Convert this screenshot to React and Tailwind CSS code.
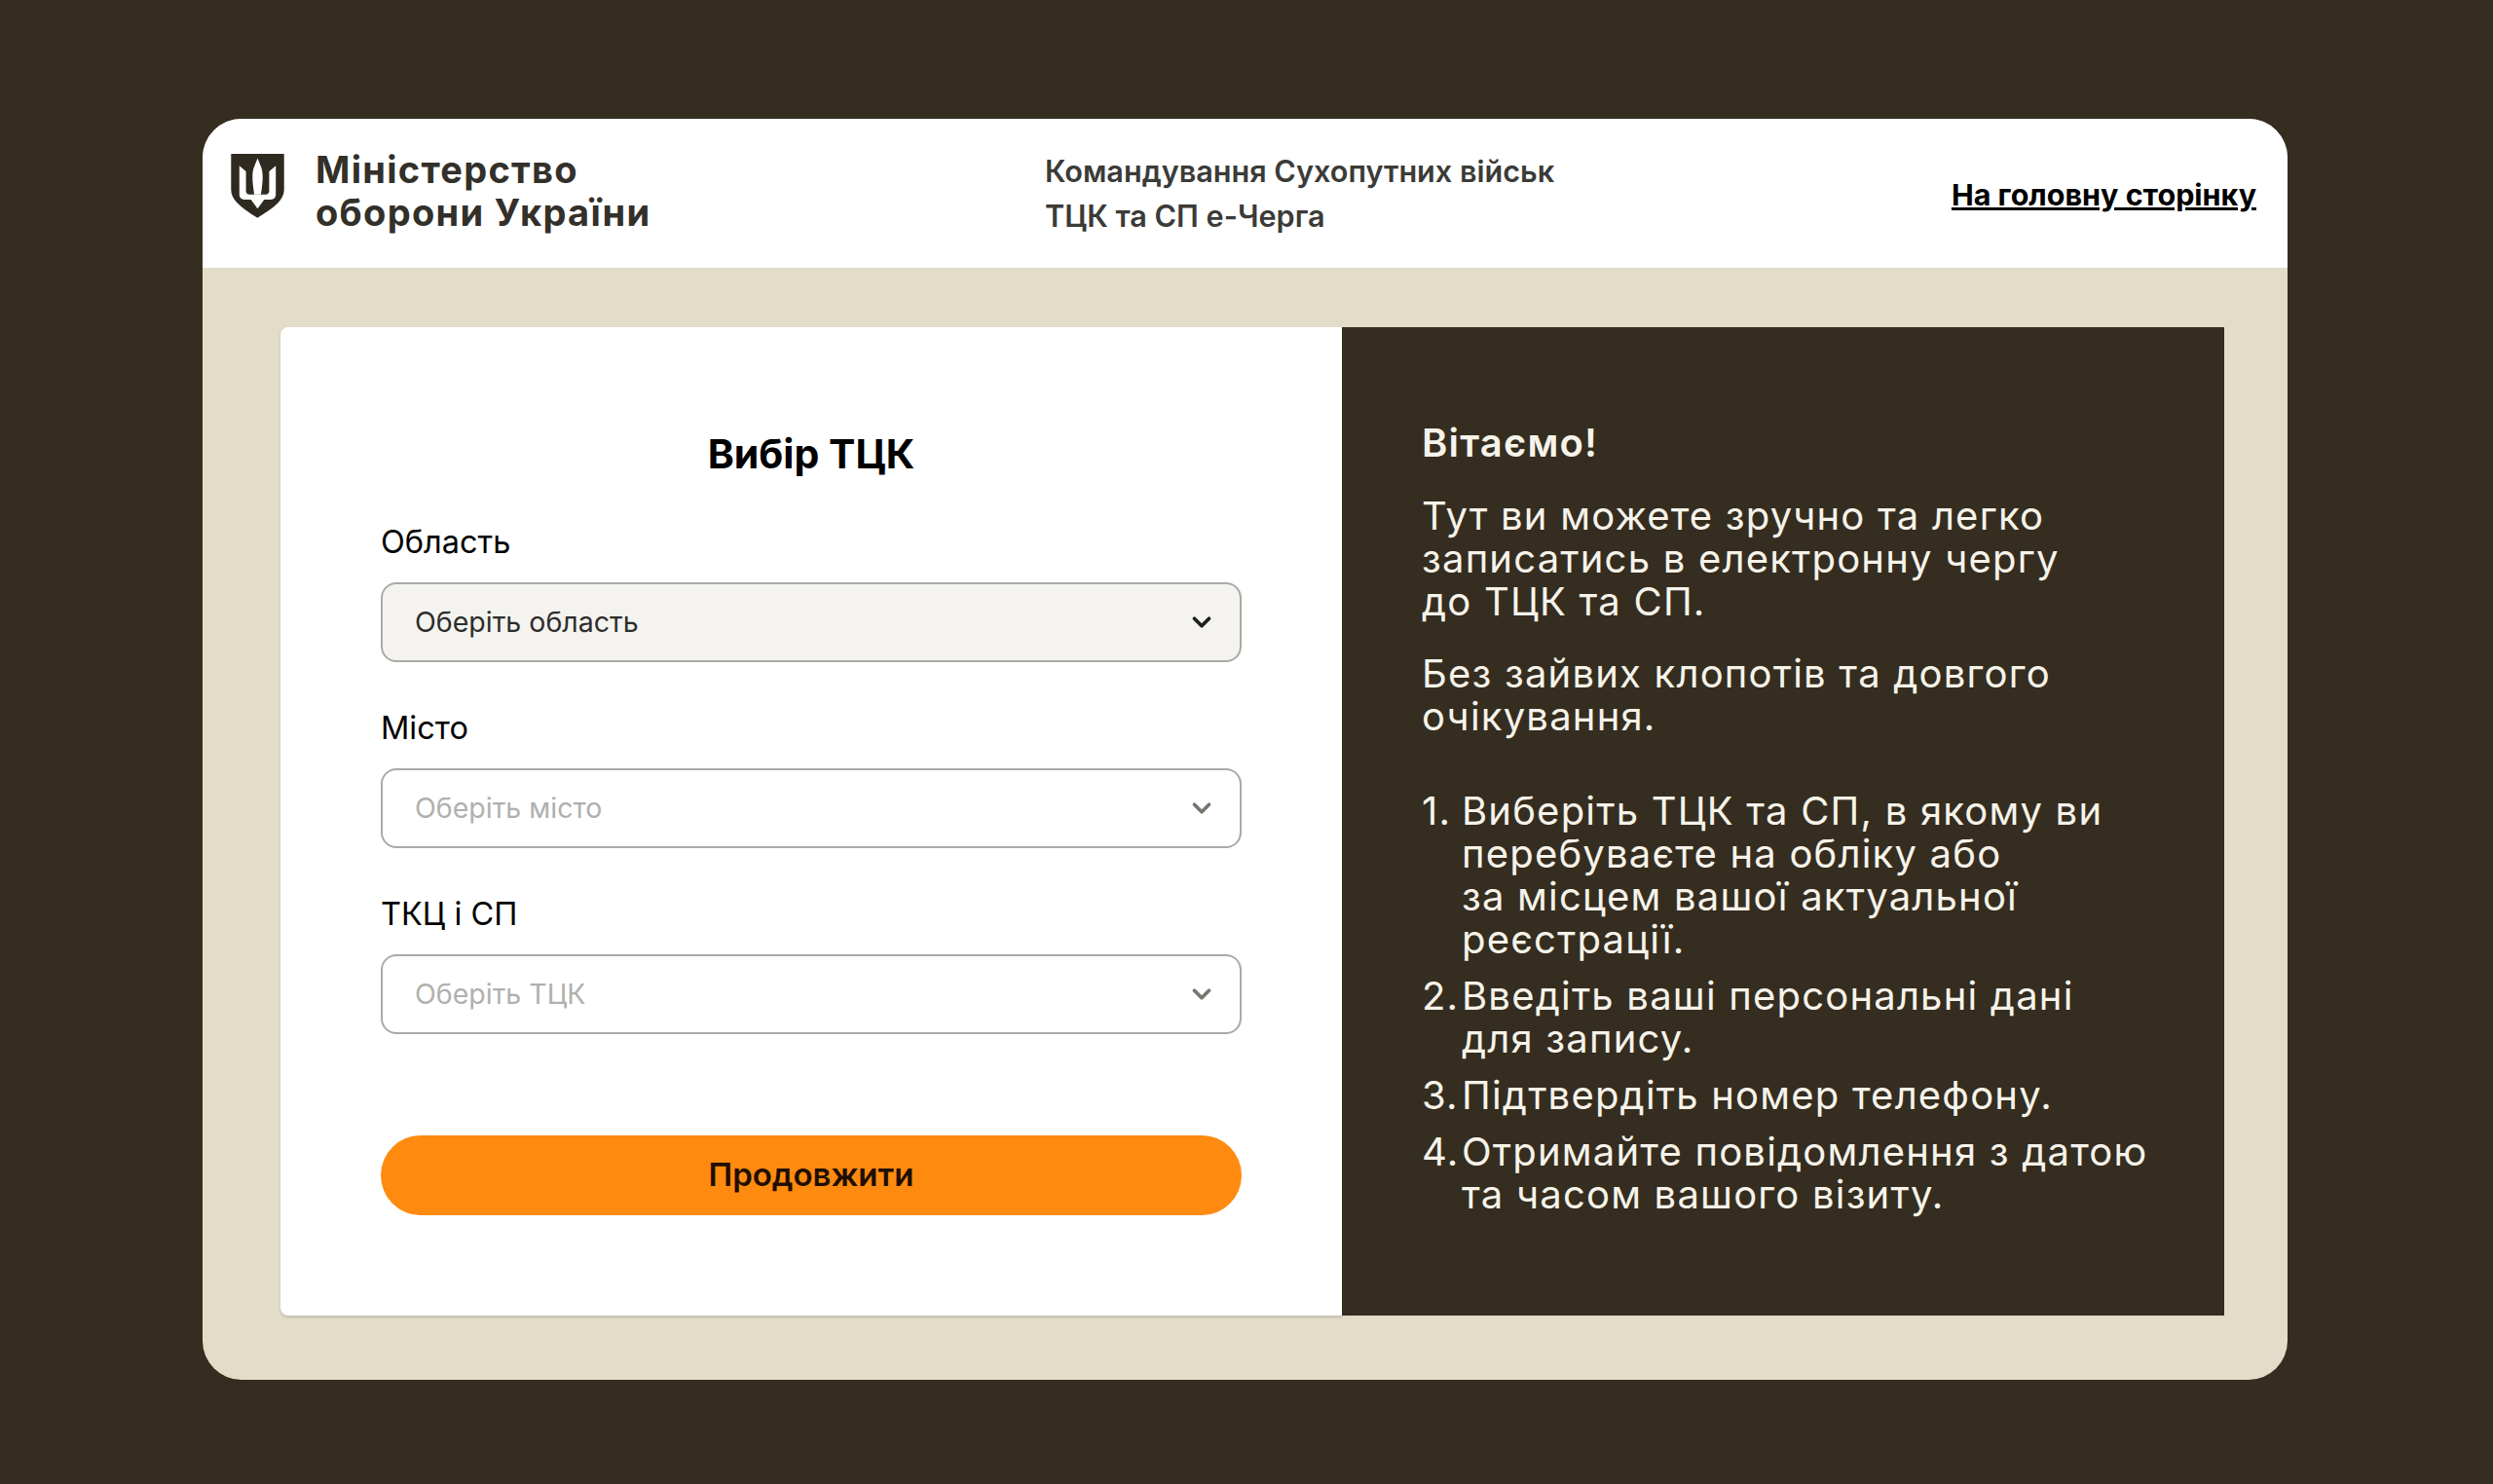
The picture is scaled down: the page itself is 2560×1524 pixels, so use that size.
import { ChevronDown } from 'lucide-react';

const Shield = () => (
    <svg className="w-[55px] h-[66px] shrink-0" viewBox="40 42 160 194">
        <path d="M40 42H200V150C200 185 160 210 120 235C80 210 40 185 40 150Z" fill="#2f2a20" />
        <g fill="#ffffff">
            <path d="M120 55L132 85C138 105 135 130 130 165H110C105 130 102 105 108 85Z" />
            <path d="M65 78L85 95V155C85 160 90 165 95 165H145C150 165 155 160 155 155V95L175 78V165C175 175 168 180 160 180H140L120 207L100 180H80C72 180 65 175 65 165Z" />
        </g>
    </svg>
);

const fields = [
    { label: 'Область', placeholder: 'Оберіть область', active: true },
    { label: 'Місто', placeholder: 'Оберіть місто' },
    { label: 'ТКЦ і СП', placeholder: 'Оберіть ТЦК' },
];

const steps = [
    ['Виберіть ТЦК та СП, в якому ви', 'перебуваєте на обліку або', 'за місцем вашої актуальної', 'реєстрації.'],
    ['Введіть ваші персональні дані', 'для запису.'],
    ['Підтвердіть номер телефону.'],
    ['Отримайте повідомлення з датою', 'та часом вашого візиту.'],
];

export default function App() {
    return (
        <div className="min-h-screen bg-[#352d20] pt-[122px] px-[208px] [font-family:Inter,sans-serif]">
            <div className="w-[2141px] h-[1295px] rounded-[40px] overflow-hidden bg-[#e2dcc8] flex flex-col">
                {/* Header */}
                <header className="h-[153px] bg-white flex items-start shrink-0">
                    <div className="w-[830px] flex pl-[29px] pt-[36px] gap-[32px]">
                        <Shield />
                        <div className="text-[38px] leading-[44px] font-bold text-[#33302a] -mt-[6px] tracking-[1.3px]">
                            <div>Міністерство</div>
                            <div>оборони України</div>
                        </div>
                    </div>
                    <div className="pl-[35px] pt-[31px] text-[30.6px] leading-[46px] font-semibold text-[#3b3b38]">
                        <div>Командування Сухопутних військ</div>
                        <div>ТЦК та СП е-Черга</div>
                    </div>
                    <a href="#" className="ml-auto mr-[32px] mt-[58px] text-[30.5px] leading-[40px] font-bold text-black underline">
                        На головну сторінку
                    </a>
                </header>

                <div className="flex-1 pt-[61px] pb-[66px] pl-[80px] pr-[65px] flex">
                    {/* Form */}
                    <div className="w-[1090px] bg-white rounded-l-[8px] shadow-[0_2px_3px_rgba(0,0,0,0.15)] px-[103px] pt-[105px]">
                        <h1 className="text-[41px] leading-[50px] font-bold text-black text-center">Вибір ТЦК</h1>
                        <div className="mt-[46px] flex flex-col gap-[48px]">
                            {fields.map((f) => (
                                <div key={f.label}>
                                    <label className="block text-[32.5px] leading-[40px] text-black mb-[21px]">{f.label}</label>
                                    <div className={`h-[82px] rounded-[16px] border-2 border-[#aaaaa8] pl-[33px] pr-[24px] flex items-center justify-between ${f.active ? 'bg-[#f4f3ef]' : 'bg-white'}`}>
                                        <span className={`text-[28.5px] ${f.active ? 'text-[#2d2d2b]' : 'text-[#b0b0ae]'}`}>{f.placeholder}</span>
                                        <ChevronDown className={`w-[30px] h-[30px] ${f.active ? 'text-[#1f1f1d]' : 'text-[#77776f]'}`} strokeWidth={3} />
                                    </div>
                                </div>
                            ))}
                        </div>
                        <button className="mt-[104px] w-full h-[82px] rounded-full bg-[#ff8a10] text-[33px] font-semibold text-[#1f0f00]">
                            Продовжити
                        </button>
                    </div>

                    {/* Welcome text */}
                    <div className="flex-1 bg-[#352d20] text-[#f6f3ea] pl-[82px] pt-[97px] text-[40px] leading-[44px] tracking-[1.2px]">
                        <h2 className="font-semibold">Вітаємо!</h2>
                        <p className="mt-[31px]">Тут ви можете зручно та легко<br />записатись в електронну чергу<br />до ТЦК та СП.</p>
                        <p className="mt-[30px]">Без зайвих клопотів та довгого<br />очікування.</p>
                        <ol className="mt-[53px] flex flex-col gap-[14px]">
                            {steps.map((lines, i) => (
                                <li key={i} className="flex">
                                    <span className="w-[41px] shrink-0">{i + 1}.</span>
                                    <span>{lines.map((l) => <div key={l}>{l}</div>)}</span>
                                </li>
                            ))}
                        </ol>
                    </div>
                </div>
            </div>
        </div>
    );
}
